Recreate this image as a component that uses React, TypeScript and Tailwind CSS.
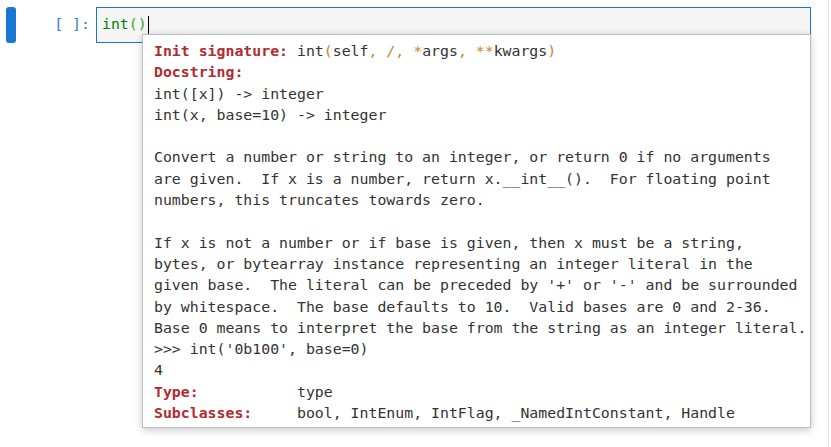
import React from 'react';

const mono = "font-['DejaVu_Sans_Mono','Liberation_Mono',monospace] text-[14.85px] leading-[21.3px]";

const Label = ({ children }: { children: React.ReactNode }) => (
  <span className="font-bold text-[#b22b31]">{children}</span>
);

const P = ({ children }: { children: React.ReactNode }) => (
  <span className="text-[#c0892c]">{children}</span>
);

const docLines = [
  'int([x]) -> integer',
  'int(x, base=10) -> integer',
  '',
  'Convert a number or string to an integer, or return 0 if no arguments',
  'are given.  If x is a number, return x.__int__().  For floating point',
  'numbers, this truncates towards zero.',
  '',
  'If x is not a number or if base is given, then x must be a string,',
  'bytes, or bytearray instance representing an integer literal in the',
  "given base.  The literal can be preceded by '+' or '-' and be surrounded",
  'by whitespace.  The base defaults to 10.  Valid bases are 0 and 2-36.',
  'Base 0 means to interpret the base from the string as an integer literal.',
  ">>> int('0b100', base=0)",
  '4',
];

const App = () => {
  return (
    <div className="relative flex w-[831px] h-[447px] bg-white overflow-hidden">
      <div className="flex-1 pt-[7px] pl-[6px]">
        <div className="flex items-stretch h-[36px]">
          <div className="w-[10px] rounded-[3px] bg-[#1976d2]" />
          <div className={`w-[80px] flex items-center justify-end pr-[6px] text-[#307fc1] ${mono}`}>
            <span className="whitespace-pre">[ ]:</span>
          </div>
          <div className={`w-[715px] border border-[#1976d2] bg-[#f5f5f5] flex items-center pl-[5px] ${mono}`}>
            <span className="text-[#008000]">int</span>
            <span className="text-[#36a82a]">()</span>
            <span className="ml-[1px] w-[1px] h-[19px] bg-black" />
          </div>
        </div>
      </div>
      <div className="w-[3px] border-l border-[#e6e6e6]" />

      <div
        className={`absolute left-[142px] top-[34px] w-[669px] bg-white border border-[#bdbdbd] shadow-[0_2px_8px_rgba(0,0,0,0.22)] pl-[11px] pt-[6px] pb-[3px] text-[#333] whitespace-pre ${mono}`}
      >
        <div>
          <Label>Init signature:</Label> int<P>(</P>self<P>, /, *</P>args<P>, **</P>kwargs<P>)</P>
        </div>
        <div>
          <Label>Docstring:</Label>
        </div>
        {docLines.map((l, i) => (
          <div key={i} className="h-[21.3px]">{l}</div>
        ))}
        <div>
          <Label>Type:</Label>{'           '}type
        </div>
        <div>
          <Label>Subclasses:</Label>{'     '}bool, IntEnum, IntFlag, _NamedIntConstant, Handle
        </div>
      </div>
    </div>
  );
};

export default App;
